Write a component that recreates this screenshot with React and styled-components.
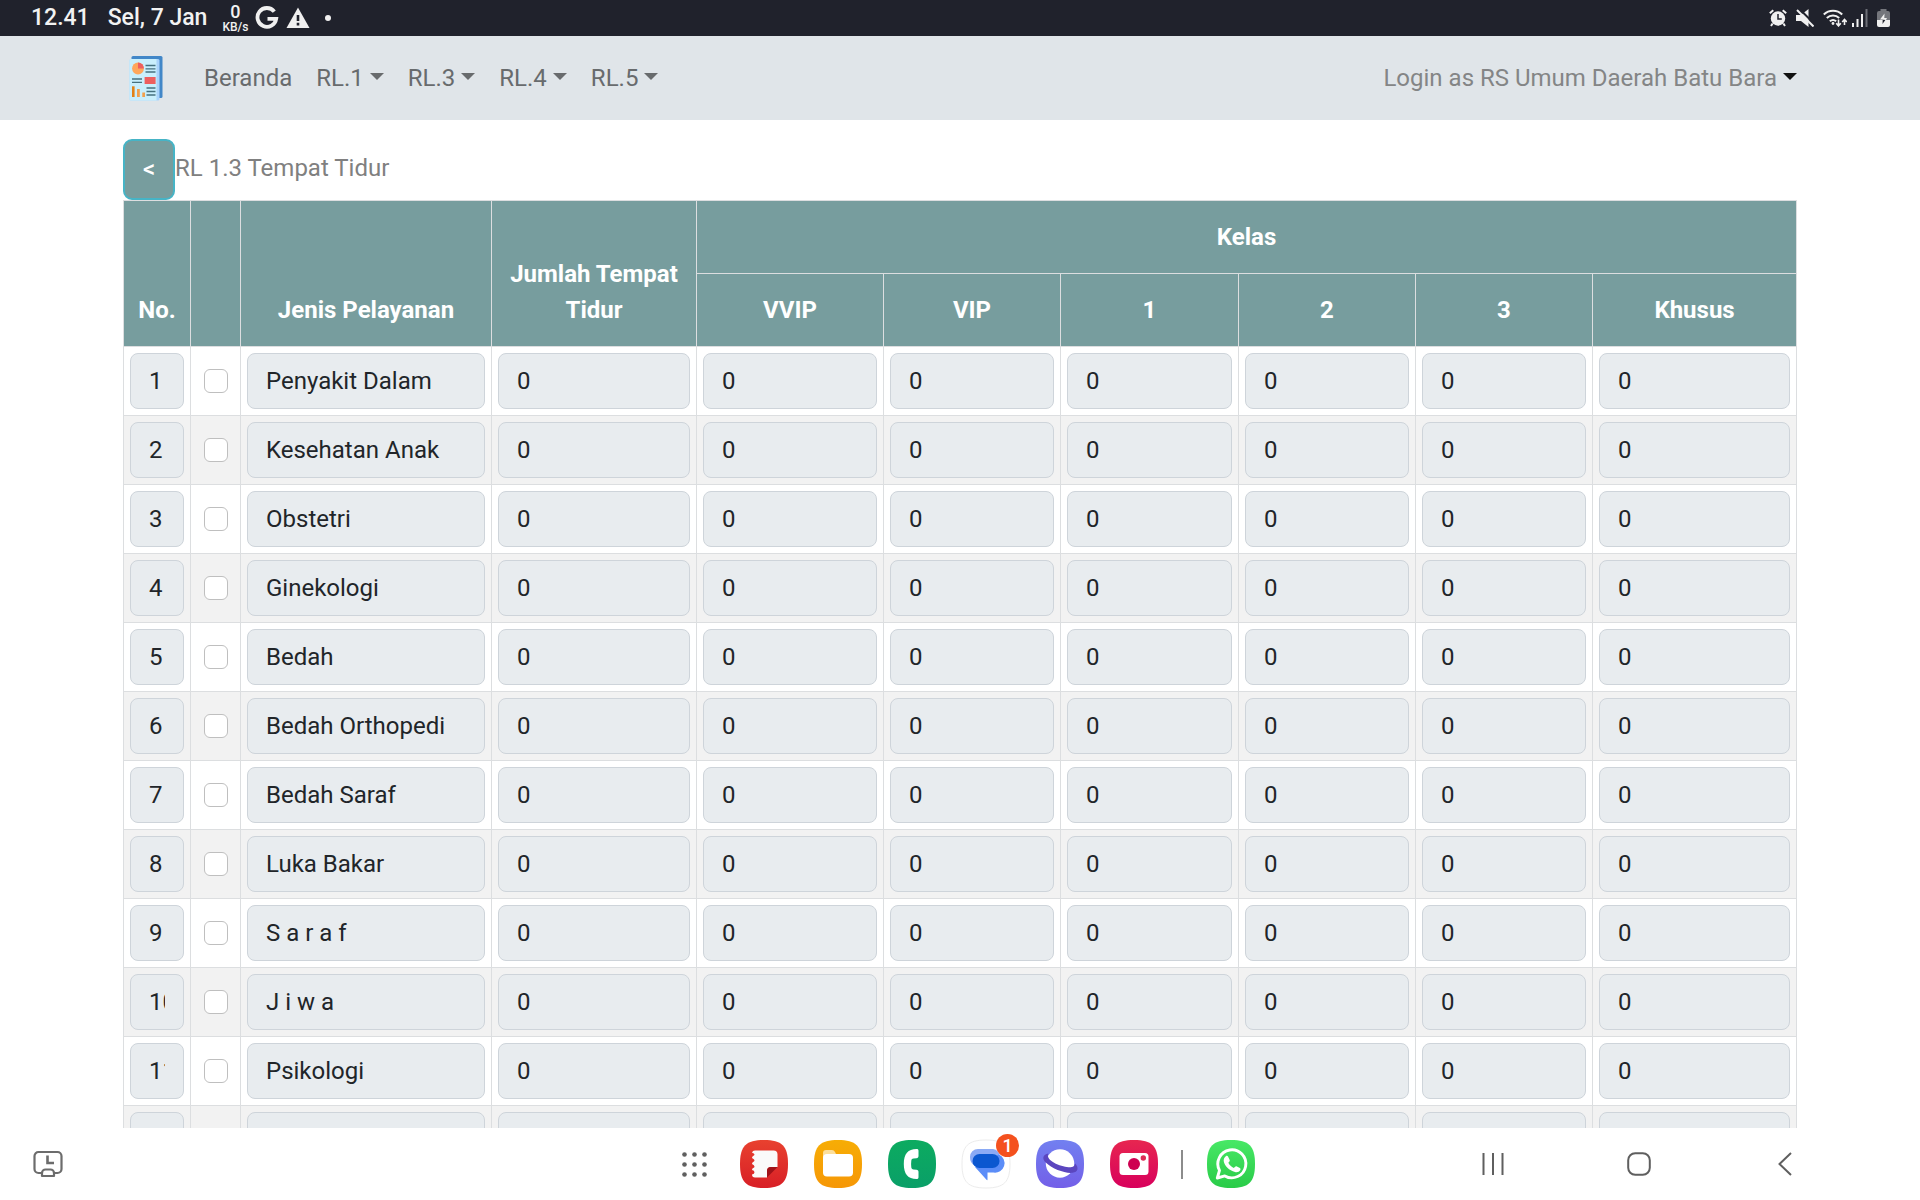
import React from "react";
import styled, { createGlobalStyle } from "styled-components";

const GlobalStyle = createGlobalStyle`
  *, *::before, *::after { box-sizing: border-box; }
  body {
    margin: 0;
    background: #fff;
    color: #212529;
    font-family: Roboto, "Noto Sans", sans-serif;
    font-size: 24px;
    line-height: 36px;
  }
  button, input { font: inherit; color: inherit; }
`;

const Screen = styled.div`
  height: 100vh;
  display: flex;
  flex-direction: column;
  overflow: hidden;
`;

/* ---------- status bar ---------- */

const StatusBar = styled.header`
  flex: none;
  height: 36px;
  padding: 0 30px 0 31px;
  display: flex;
  align-items: center;
  justify-content: space-between;
  background: #20222c;
  color: #f2f2f2;
  font-size: 23px;
  font-weight: 500;
  line-height: 34px;
`;

const StatusGroup = styled.div`
  display: flex;
  align-items: center;
  gap: ${(p) => p.$gap}px;
`;

const NetSpeed = styled.span`
  display: flex;
  flex-direction: column;
  align-items: center;
  font-size: 12px;
  line-height: 12px;
  b {
    font-size: 18px;
    line-height: 18px;
    font-weight: 500;
  }
`;

/* ---------- navigation ---------- */

const NavBar = styled.nav`
  flex: none;
  min-height: 84px;
  padding: 0 123px;
  display: flex;
  align-items: center;
  background: #e0e5e9;
`;

const Brand = styled.a`
  display: flex;
  margin-right: 21px;
`;

const NavList = styled.ul`
  display: flex;
  flex: 1;
  margin: 0;
  padding: 0;
  list-style: none;
`;

const NavLink = styled.a`
  display: block;
  padding: 0 12px;
  color: #686b6d;
  text-decoration: none;
`;

const Caret = styled.span`
  display: inline-block;
  margin-left: 6px;
  vertical-align: 6px;
  border: 7px solid transparent;
  border-top-color: ${(p) => p.$color || "currentColor"};
  border-bottom: 0;
`;

const UserButton = styled.button`
  padding: 0;
  border: 0;
  background: none;
  color: #848586;
`;

/* ---------- page ---------- */

const Page = styled.main`
  flex: 1;
  min-height: 0;
  overflow: hidden;
  padding: 19px 123px 0;
`;

const PageHead = styled.div`
  display: flex;
  align-items: center;
`;

const BackButton = styled.button`
  width: 52px;
  height: 61px;
  padding: 0 0 2px;
  border: 2px solid #46b4c6;
  border-radius: 9px;
  background: #779d9e;
  color: #fff;
  font-weight: 500;
`;

const Title = styled.h1`
  margin: 0;
  padding-bottom: 4px;
  color: #808080;
  font-size: 24px;
  font-weight: 400;
`;

const Table = styled.table`
  width: 100%;
  table-layout: fixed;
  border-collapse: collapse;
  th, td { border: 1px solid #dcdee0; }
`;

const HeadCell = styled.th`
  padding: 18px 12px;
  background: #779d9e;
  color: #fff;
  font-weight: 700;
  vertical-align: bottom;
`;

const Row = styled.tr`
  background: #fff;
  &:nth-child(even) { background: #f2f2f2; }
`;

const Cell = styled.td`
  padding: 6px;
  text-align: center;
`;

const Field = styled.input`
  display: block;
  width: 100%;
  height: 56px;
  padding: 0 18px;
  border: 1px solid #ced4da;
  border-radius: 8px;
  background: #e8ecef;
  outline: none;
`;

const Check = styled.input`
  appearance: none;
  display: block;
  width: 24px;
  height: 24px;
  margin: 0 auto;
  border: 1px solid #bfbfbf;
  border-radius: 6px;
  background: #fff;
`;

/* ---------- system dock ---------- */

const TaskBar = styled.footer`
  flex: none;
  height: 72px;
  display: grid;
  grid-template-columns: 1fr auto 1fr;
  align-items: center;
  background: #fff;
`;

const IconButton = styled.button`
  position: relative;
  display: flex;
  align-items: center;
  justify-content: ${(p) => p.$justify || "center"};
  width: ${(p) => p.$width}px;
  height: 72px;
  padding: ${(p) => p.$padding || "0"};
  border: 0;
  background: none;
`;

const Dock = styled.div`
  display: flex;
  align-items: center;
`;

const Divider = styled.span`
  width: 2px;
  height: 29px;
  margin: 0 11px 0 10px;
  background: #8c8c8c;
`;

const Badge = styled.span`
  position: absolute;
  top: 6px;
  right: 4px;
  width: 23px;
  height: 23px;
  border-radius: 50%;
  background: #f4511e;
  color: #fff;
  font-size: 18px;
  font-weight: 500;
  line-height: 23px;
  text-align: center;
`;

const NavKeys = styled.div`
  display: flex;
  justify-content: flex-end;
  padding-right: 62px;
`;

/* ---------- drawings ---------- */

const LogoIcon = () => (
  <svg width="48" height="48" viewBox="0 0 48 48" aria-hidden="true">
    <path d="M10 2h28a1.5 1.5 0 0 1 1.500 1.500v39a1.500 1.500 0 0 1-1.500 1.500H10a1.500 1.500 0 0 1-1.500-1.500v-39A1.500 1.500 0 0 1 10 2z" fill="#4287c8" />
    <rect x="6.500" y="5" width="30" height="41.500" rx="1.500" fill="#a9d3fb" />
    <path d="M8 5h25.500v41.500H8A1.500 1.500 0 0 1 6.500 45V6.500A1.500 1.500 0 0 1 8 5z" fill="#c9effc" />
    <circle cx="15" cy="14.500" r="5.900" fill="#fea75b" />
    <path d="M15 14.500V8.600a5.900 5.900 0 0 1 5.900 5.900z" fill="#ed5f5f" />
    <path d="M22.500 11.500h10M22.500 14.800h10M22.500 18h10M9 25h10M9 28.300h10M23.500 34h9M23.500 37.500h9M23.500 41h9" stroke="#45717f" strokeWidth="1.300" />
    <rect x="21.600" y="23" width="11" height="7" fill="#ed5f5f" />
    <path d="M9 32.300h2.600V43H9z" fill="#e18317" />
    <path d="M14 35h2.800v8H14zM19.300 38.500H22V43h-2.700z" fill="#f2a14c" />
  </svg>
);

const GoogleIcon = () => (
  <svg width="24" height="24" viewBox="0 0 24 24" aria-hidden="true">
    <path d="M19.300 5.600A9.400 9.400 0 1 0 21.200 12.800H12.500" fill="none" stroke="#f0f0f0" strokeWidth="3.800" />
  </svg>
);

const WarningIcon = () => (
  <svg width="24" height="24" viewBox="0 0 24 24" aria-hidden="true">
    <path d="M12 1.500 23.500 22H.5z" fill="#f0f0f0" />
    <path d="M10.700 9h2.600v6h-2.600zM10.700 16.800h2.600v2.600h-2.600z" fill="#20222c" />
  </svg>
);

const DotIcon = () => (
  <svg width="6" height="6" viewBox="0 0 6 6" aria-hidden="true">
    <circle cx="3" cy="3" r="3" fill="#f0f0f0" />
  </svg>
);

const AlarmIcon = () => (
  <svg width="18" height="18" viewBox="0 0 18 18" aria-hidden="true">
    <circle cx="9" cy="9.500" r="7.200" fill="#f0f0f0" />
    <path d="M.8 4.300 4.300 1.200M17.200 4.300 13.700 1.200M3.600 14.500 2 17M14.400 14.500 16 17" stroke="#f0f0f0" strokeWidth="2" />
    <path d="M9 5v5h3.800" fill="none" stroke="#20222c" strokeWidth="1.500" />
  </svg>
);

const MuteIcon = () => (
  <svg width="18" height="18" viewBox="0 0 18 18" aria-hidden="true">
    <path d="M0 6h5l7.500-6v18L5 12H0z" fill="#f0f0f0" />
    <path d="M3-.5 19 15.500" stroke="#20222c" strokeWidth="2" />
    <path d="M1 1l16.500 16.500" stroke="#f0f0f0" strokeWidth="2" />
  </svg>
);

const WifiIcon = () => (
  <svg width="24" height="18" viewBox="0 0 24 18" aria-hidden="true">
    <g fill="none" stroke="#f0f0f0" strokeWidth="2">
      <path d="M.8 5.500a13.300 13.300 0 0 1 18.400 0M3.800 9a9 9 0 0 1 12.400 0M6.800 12.300a5 5 0 0 1 6.400 0" />
      <path d="M15.500 10.500v6M13.200 14.300l2.300 2.600 2.300-2.600M21.500 16v-5.500M19.200 13l2.300-2.600 2.300 2.600" strokeWidth="1.600" />
    </g>
    <circle cx="10" cy="14.500" r="1.400" fill="#f0f0f0" />
  </svg>
);

const SignalIcon = () => (
  <svg width="16" height="18" viewBox="0 0 16 18" aria-hidden="true">
    <path d="M0 14h2v4H0zM4.500 10h2v8h-2zM9 5h2v13H9z" fill="#f0f0f0" />
    <path d="M13.500 0h2v18h-2z" fill="#6c6e76" />
  </svg>
);

const BatteryIcon = () => (
  <svg width="13" height="18" viewBox="0 0 13 18" aria-hidden="true">
    <path d="M3.500 0h6v2H11a2 2 0 0 1 2 2v7.500H0V4a2 2 0 0 1 2-2h1.500z" fill="#74767c" />
    <path d="M0 11h13v5a2 2 0 0 1-2 2H2a2 2 0 0 1-2-2z" fill="#f0f0f0" />
    <path d="M7.500 4.500 3 10.500h3l-.5 0L9 11l1-2H7.300z" fill="#f0f0f0" />
    <path d="M5.700 11h2.600L5.500 15z" fill="#20222c" />
  </svg>
);

const squircle = "M24 0C42 0 48 6 48 24S42 48 24 48 0 42 0 24 6 0 24 0Z";

const AppTile = ({ id, from, to, stroke, children }) => (
  <svg width="48" height="48" viewBox="0 0 48 48" overflow="visible" aria-hidden="true">
    <defs>
      <linearGradient id={id} x1="0" y1="0" x2="0" y2="1">
        <stop offset="0" stopColor={from} />
        <stop offset="1" stopColor={to} />
      </linearGradient>
    </defs>
    <path d={squircle} fill={`url(#${id})`} stroke={stroke || "none"} />
    {children}
  </svg>
);

const NotesArt = () => (
  <AppTile id="notes" from="#e8412f" to="#d81f26">
    <path d="M15 10.500h18.500q4 0 4 4V27H31q-4 0-4 4v6.500H15q-3 0-3-3 2.500-.5 2.500-2.200T12 30q0-1.500 1.200-2 1.300-.6 1.300-1.600T12 24q0-1.500 1.200-2 1.300-.6 1.300-1.700T12 18q0-1.500 1.200-2 1.300-.6 1.300-1.500T12 12.800q.5-2.300 3-2.300z" fill="#fafafa" />
    <path d="M27 37.500V31q0-4 4-4h6.500z" fill="#9f1219" />
  </AppTile>
);

const FilesArt = () => (
  <AppTile id="files" from="#f7ad05" to="#f69706">
    <path d="M9 13q0-3 3-3h6q2 0 3 2l1 2h12v8H9z" fill="#fcdf9c" />
    <rect x="9" y="14" width="30" height="22.500" rx="4" fill="#fff" />
  </AppTile>
);

const PhoneArt = () => (
  <AppTile id="phone" from="#0cab60" to="#0a9f68">
    <path d="M28.500 9c1.500 0 2 .6 2 2v5c0 1.300-.6 2-2 2.200l-3 .3c-1.300.1-2 .8-2.200 2.200a26 26 0 0 0 0 6.600c.2 1.400.9 2.100 2.200 2.200l3 .3c1.400.2 2 .9 2 2.200v5c0 1.400-.5 2-2 2-8.500 0-12.700-5-12.700-15S20 9 28.500 9z" fill="#fff" />
  </AppTile>
);

const MessagesArt = () => (
  <AppTile id="messages" from="#ffffff" to="#ffffff" stroke="#ececec">
    <path d="M16 9h15a8 8 0 0 1 7 8H15l-2 9A10 10 0 0 1 8 17a8 8 0 0 1 8-8z" fill="#8baaf5" />
    <path d="M37 14.500a9.500 9.500 0 0 1-5.500 18h-6V39.500q0 1.200-1 .3L13 27z" fill="#5b8df8" />
    <rect x="10.500" y="14" width="27" height="14" rx="7" fill="#0b57d0" />
  </AppTile>
);

const InternetArt = () => (
  <AppTile id="internet" from="#7280f0" to="#735fe8">
    <circle cx="24" cy="23.500" r="14.200" fill="#fff" />
    <path d="M12.300 13.500C7 14.500 5.500 18.500 10 22.800c6.500 6 18.500 10.800 26.500 10 5.500-.6 6.700-5 2.500-9.500.2 3-2.500 4.300-6.500 4C24.500 26.600 9 20.500 12.300 13.500z" fill="#5b46bf" />
  </AppTile>
);

const CameraArt = () => (
  <AppTile id="camera" from="#e72650" to="#d8005c">
    <rect x="9.500" y="13" width="29" height="22" rx="3.500" fill="#fff" />
    <circle cx="24" cy="24" r="6" fill="#ce0051" />
    <circle cx="33.300" cy="18" r="2.700" fill="#dd2b55" />
  </AppTile>
);

const WhatsAppArt = () => (
  <AppTile id="whatsapp" from="#48e866" to="#29cb48">
    <path d="M10.300 38l2.200-7.600A14 14 0 1 1 17.800 35.900z" fill="none" stroke="#fff" strokeWidth="2.900" strokeLinejoin="round" />
    <path d="M18.800 16.200c.6-.5 1.800-.6 2.200.2l1.700 3.600c.3.800-.2 1.500-1.400 2.800 1.300 2.400 3 4 5.600 5.200 1.200-1.400 1.700-2.100 2.500-1.800l3.500 1.700c.8.400.7 1.500.3 2.300-.9 1.700-3.200 2.300-5.200 1.800-5.700-1.400-10.700-6.300-11.300-11-.2-1.900.7-3.700 2.100-4.800z" fill="#fff" />
  </AppTile>
);

const AppsIcon = () => (
  <svg width="25" height="25" viewBox="0 0 25 25" fill="#5f5f5f" aria-hidden="true">
    {[2.500, 12.500, 22.500].map((y) =>
      [2.500, 12.500, 22.500].map((x) => <circle key={`${x}-${y}`} cx={x} cy={y} r="2.300" />)
    )}
  </svg>
);

const RecentDeviceIcon = () => (
  <svg width="30" height="28" viewBox="0 0 30 28" fill="none" stroke="#6c6c6c" strokeWidth="2.200" aria-hidden="true">
    <path d="M9 23H5.500A4 4 0 0 1 1.500 19V6a4 4 0 0 1 4-4h19a4 4 0 0 1 4 4v13a4 4 0 0 1-4 4H21" />
    <path d="M9 26v-3a3.500 3.500 0 0 1 3.500-3.500h5A3.500 3.500 0 0 1 21 23v3z" strokeLinejoin="round" />
    <path d="M14.500 5.500V13H21" strokeWidth="2.600" />
  </svg>
);

const RecentsIcon = () => (
  <svg width="22" height="24" viewBox="0 0 22 24" stroke="#5f5f5f" strokeWidth="2" aria-hidden="true">
    <path d="M1.500 1v22M11 1v22M20.500 1v22" />
  </svg>
);

const HomeIcon = () => (
  <svg width="24" height="24" viewBox="0 0 24 24" aria-hidden="true">
    <rect x="1.200" y="1.200" width="21.600" height="21.600" rx="7" fill="none" stroke="#5f5f5f" strokeWidth="2" />
  </svg>
);

const BackIcon = () => (
  <svg width="14" height="24" viewBox="0 0 14 24" aria-hidden="true">
    <path d="M13 1 1.500 12 13 23" fill="none" stroke="#5f5f5f" strokeWidth="2" />
  </svg>
);

/* ---------- data ---------- */

const menus = ["RL.1", "RL.3", "RL.4", "RL.5"];
const classes = ["VVIP", "VIP", "1", "2", "3", "Khusus"];
const columnWidths = [67, 50, 251, 205, 187, 177, 178, 177, 177, 204];
const services = [
  "Penyakit Dalam",
  "Kesehatan Anak",
  "Obstetri",
  "Ginekologi",
  "Bedah",
  "Bedah Orthopedi",
  "Bedah Saraf",
  "Luka Bakar",
  "S a r a f",
  "J i w a",
  "Psikologi",
  "",
];

const apps = [
  ["Notes", NotesArt],
  ["Files", FilesArt],
  ["Phone", PhoneArt],
  ["Messages", MessagesArt],
  ["Internet", InternetArt],
  ["Camera", CameraArt],
];

const ServiceRow = ({ number, name }) => (
  <Row>
    <Cell><Field aria-label="No." readOnly value={name ? number : ""} /></Cell>
    <Cell>{name && <Check type="checkbox" aria-label={name} />}</Cell>
    <Cell><Field aria-label="Jenis Pelayanan" readOnly value={name} /></Cell>
    {["Jumlah Tempat Tidur", ...classes].map((label) => (
      <Cell key={label}><Field aria-label={label} readOnly value={name ? "0" : ""} /></Cell>
    ))}
  </Row>
);

export default function App() {
  return (
    <Screen>
      <GlobalStyle />
      <StatusBar>
        <StatusGroup $gap={15}>
          <StatusGroup $gap={18}>
            <span>12.41</span>
            <span>Sel, 7 Jan</span>
          </StatusGroup>
          <StatusGroup $gap={7}>
            <NetSpeed><b>0</b>KB/s</NetSpeed>
            <GoogleIcon />
            <WarningIcon />
          </StatusGroup>
          <DotIcon />
        </StatusGroup>
        <StatusGroup $gap={9}>
          <AlarmIcon />
          <MuteIcon />
          <StatusGroup $gap={5}>
            <WifiIcon />
            <SignalIcon />
          </StatusGroup>
          <BatteryIcon />
        </StatusGroup>
      </StatusBar>

      <NavBar>
        <Brand href="#" aria-label="Beranda"><LogoIcon /></Brand>
        <NavList>
          <li><NavLink href="#">Beranda</NavLink></li>
          {menus.map((menu) => (
            <li key={menu}><NavLink href="#">{menu}<Caret /></NavLink></li>
          ))}
        </NavList>
        <UserButton type="button">
          Login as RS Umum Daerah Batu Bara<Caret $color="#111" />
        </UserButton>
      </NavBar>

      <Page>
        <PageHead>
          <BackButton type="button">&lt;</BackButton>
          <Title>RL 1.3 Tempat Tidur</Title>
        </PageHead>
        <Table>
          <colgroup>
            {columnWidths.map((width, i) => <col key={i} width={width} />)}
          </colgroup>
          <thead>
            <tr>
              <HeadCell rowSpan={2}>No.</HeadCell>
              <HeadCell rowSpan={2} />
              <HeadCell rowSpan={2}>Jenis Pelayanan</HeadCell>
              <HeadCell rowSpan={2}>Jumlah Tempat Tidur</HeadCell>
              <HeadCell colSpan={6}>Kelas</HeadCell>
            </tr>
            <tr>
              {classes.map((name) => <HeadCell key={name}>{name}</HeadCell>)}
            </tr>
          </thead>
          <tbody>
            {services.map((name, i) => (
              <ServiceRow key={i} number={String(i + 1)} name={name} />
            ))}
          </tbody>
        </Table>
      </Page>

      <TaskBar>
        <IconButton $width={96} aria-label="Continue on other devices"><RecentDeviceIcon /></IconButton>
        <Dock>
          <IconButton $width={75} $justify="flex-end" $padding="0 20px 0 0" aria-label="Apps"><AppsIcon /></IconButton>
          {apps.map(([label, Art]) => (
            <IconButton key={label} $width={74} aria-label={label}>
              <Art />
              {label === "Messages" && <Badge>1</Badge>}
            </IconButton>
          ))}
          <Divider />
          <IconButton $width={74} aria-label="WhatsApp"><WhatsAppArt /></IconButton>
        </Dock>
        <NavKeys>
          <IconButton $width={146} aria-label="Recents"><RecentsIcon /></IconButton>
          <IconButton $width={146} aria-label="Home"><HomeIcon /></IconButton>
          <IconButton $width={146} aria-label="Back"><BackIcon /></IconButton>
        </NavKeys>
      </TaskBar>
    </Screen>
  );
}
